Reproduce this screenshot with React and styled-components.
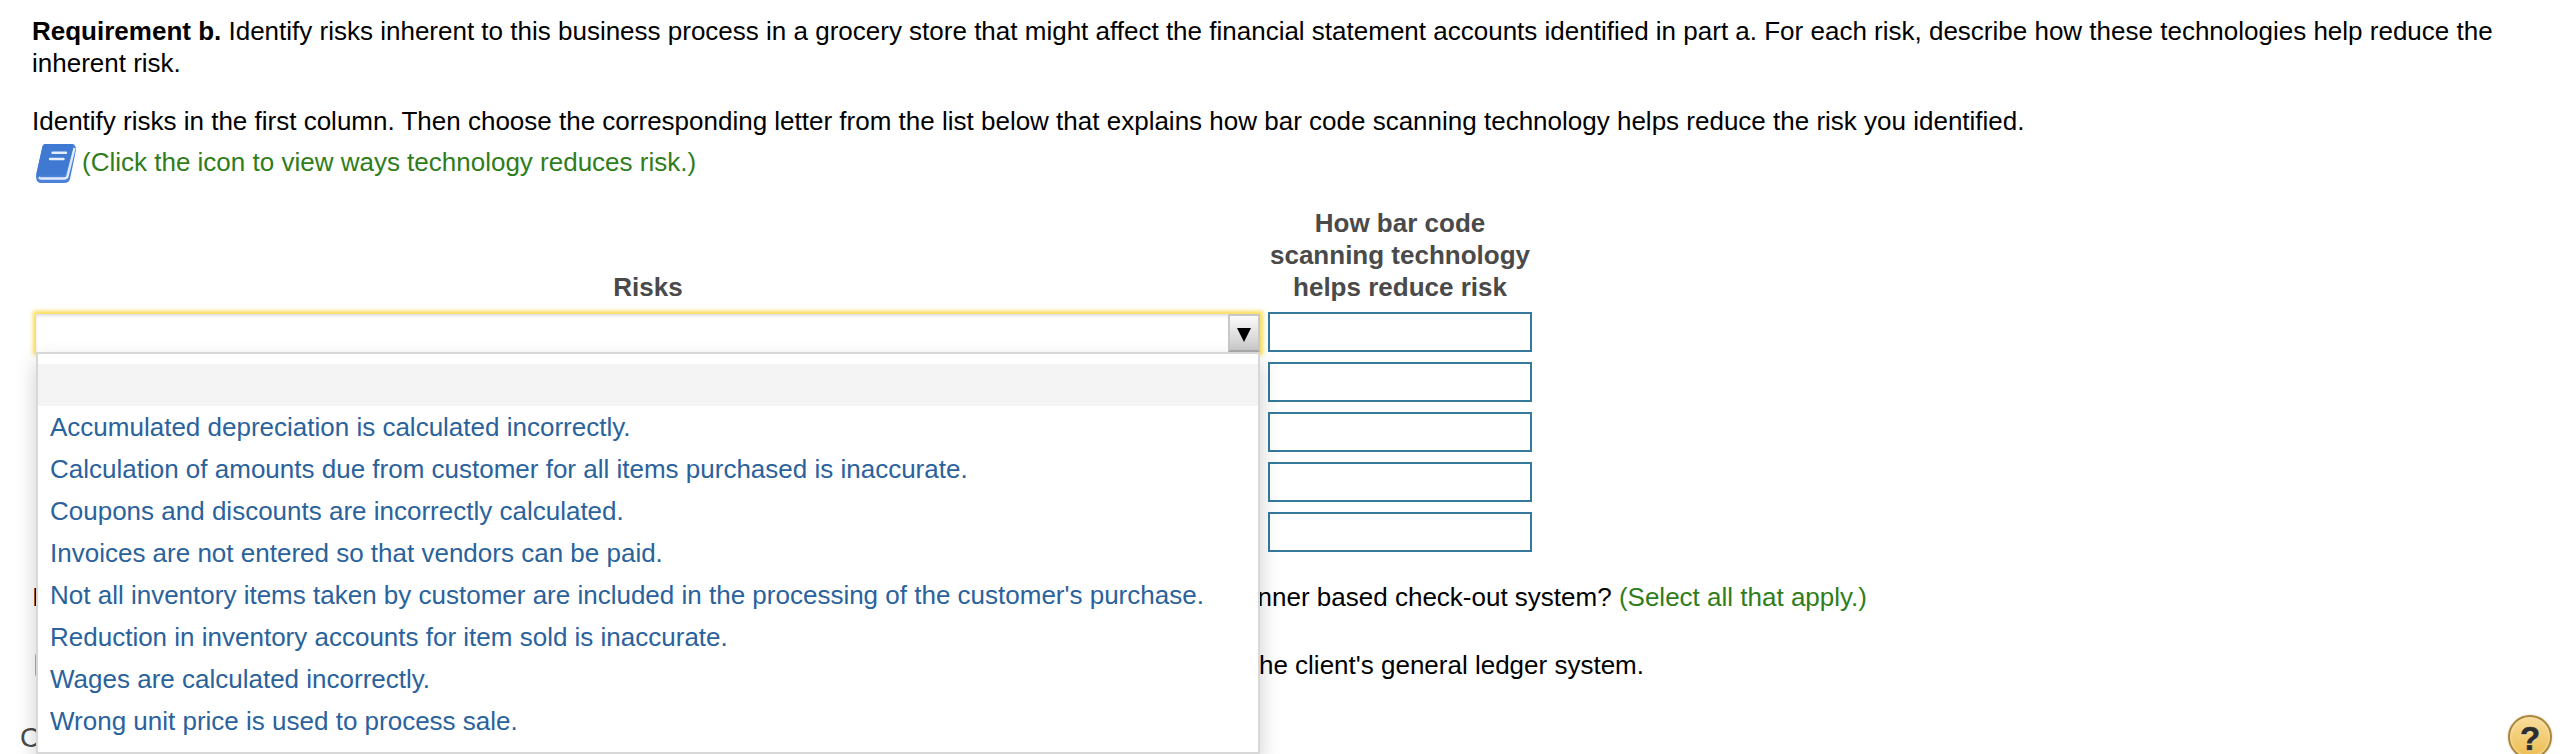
import React from 'react'
import styled, { createGlobalStyle } from 'styled-components'

const GlobalStyle = createGlobalStyle`
  body {
    margin: 0;
    background: #fff;
    overflow: hidden;
  }
`

const Page = styled.main`
  box-sizing: border-box;
  height: 754px;
  padding: 15px 32px 0;
  position: relative;
  overflow: hidden;
  color: #000;
  font-family: "Liberation Sans", Arial, sans-serif;
  font-size: 26px;
  line-height: 32px;
`

const Paragraph = styled.p`
  margin: 0 0 ${({ $gap }) => $gap || 0}px;
`

const IconLink = styled.a`
  display: flex;
  align-items: flex-start;
  height: 40px;
  margin-top: 7px;
  padding-left: 4px;
  gap: 6px;
  color: #2f7d1b;
  line-height: 36px;
`

const BookIcon = styled.svg`
  width: 40px;
  height: 40px;
`

const Table = styled.div`
  display: grid;
  grid-template-columns: 1228px 264px;
  column-gap: 8px;
  margin-top: 23px;
`

const Heading = styled.div`
  align-self: end;
  padding: 0 0 9px ${({ $indent }) => $indent || 0}px;
  color: #4a4a4a;
  font-weight: bold;
  text-align: center;
`

const ComboCell = styled.div`
  position: relative;
  padding: 2px 0 0 4px;
`

const Combo = styled.div`
  display: flex;
  justify-content: flex-end;
  height: 38px;
  background: #fff;
  box-shadow: 0 0 4px 3px #fbdc55, inset 0 2px 3px rgba(0, 0, 0, 0.12);
`

const ComboButton = styled.button`
  display: flex;
  align-items: center;
  justify-content: center;
  box-sizing: border-box;
  width: 32px;
  height: 38px;
  padding: 3px 0 0;
  border: 2px solid #c8c8c8;
  border-bottom-color: #aaa;
  background: linear-gradient(#fbfbfb, #c9c9c9);
`

const Menu = styled.ul`
  position: absolute;
  top: 40px;
  left: 4px;
  z-index: 2;
  box-sizing: border-box;
  width: 1224px;
  height: 402px;
  margin: 0;
  padding: 10px 0;
  border: 2px solid #d8d8d8;
  background: #fff;
  box-shadow: 0 10px 20px rgba(0, 0, 0, 0.2);
  list-style: none;
`

const MenuItem = styled.li`
  height: 42px;
  padding-left: 12px;
  background: ${({ $active }) => ($active ? '#f4f4f4' : 'transparent')};
  color: #2a629c;
  line-height: 42px;
  white-space: nowrap;
`

const Answers = styled.div`
  display: grid;
  row-gap: 10px;
`

const AnswerBox = styled.div`
  box-sizing: border-box;
  height: 40px;
  border: 2px solid #35799b;
  background: #fff;
`

const SplitRow = styled.div`
  display: flex;
  justify-content: space-between;
  width: ${({ $width }) => $width}px;
  margin-top: ${({ $top }) => $top}px;
`

const Green = styled.span`
  color: #2f7d1b;
`

const Checkbox = styled.span`
  box-sizing: border-box;
  width: 26px;
  height: 26px;
  margin: 3px 0 0 3px;
  border: 1px solid #a9a9d0;
  border-radius: 4px;
`

const Footer = styled.div`
  display: flex;
  justify-content: space-between;
  margin: 34px -24px 0 -12px;
  color: #4a4a4a;
  font-size: 28px;
`

const FooterNote = styled.span`
  margin-top: 7px;
`

const HelpButton = styled.button`
  box-sizing: border-box;
  width: 44px;
  height: 44px;
  margin: 0;
  padding: 4px 0 0;
  flex: none;
  border: 2px solid #ab8739;
  border-radius: 50%;
  background: linear-gradient(#f8dc9c, #edbd50);
  box-shadow: inset 0 0 2px 1px #f7dfa8, 0 0 2px rgba(120, 90, 30, 0.4);
  color: #2d2d31;
  font: bold 33px/34px "Liberation Sans", Arial, sans-serif;
  text-shadow: 0 1px 1px #fff0c8;
  -webkit-text-stroke: 0.6px #2d2d31;
`

const risks = [
  '',
  'Accumulated depreciation is calculated incorrectly.',
  'Calculation of amounts due from customer for all items purchased is inaccurate.',
  'Coupons and discounts are incorrectly calculated.',
  'Invoices are not entered so that vendors can be paid.',
  "Not all inventory items taken by customer are included in the processing of the customer's purchase.",
  'Reduction in inventory accounts for item sold is inaccurate.',
  'Wages are calculated incorrectly.',
  'Wrong unit price is used to process sale.',
]

const Book = () => (
  <BookIcon viewBox="0 0 40 40">
    <path d="M9 0H37Q40 1 40 6L34 35Q33 39 28 39H4Q0 38 0 32L6 4Q7 0 9 0Z" fill="#4c83d8" />
    <path d="M38.5 4L31.5 32Q31 34.5 28 34.5H5Q2.5 34.5 3 32" fill="none" stroke="#dfeafa" strokeWidth="2.4" />
    <path d="M10 0H35Q38 0 37 4L30 28Q29 31.5 26 31.5H5Q3 31.5 3 34Q0 33 0.5 29L6.5 3Q7 0 10 0Z" fill="#3f79d2" />
    <path d="M16.5 8.8H30M14 15H27.5" stroke="#e3edfb" strokeWidth="2.4" strokeLinecap="round" />
  </BookIcon>
)

const App = () => {
  return (
    <>
      <GlobalStyle />
      <Page>
        <Paragraph $gap={26}>
          <b>Requirement b.</b> Identify risks inherent to this business process in a grocery store that might affect the financial statement accounts identified in part a. For each risk, describe how these technologies help reduce the inherent risk.
        </Paragraph>
        <Paragraph>
          Identify risks in the first column. Then choose the corresponding letter from the list below that explains how bar code scanning technology helps reduce the risk you identified.
        </Paragraph>
        <IconLink>
          <Book />
          (Click the icon to view ways technology reduces risk.)
        </IconLink>
        <Table>
          <Heading $indent={4}>Risks</Heading>
          <Heading>
            How bar code<br />scanning technology<br />helps reduce risk
          </Heading>
          <ComboCell>
            <Combo>
              <ComboButton>
                <svg width="14" height="14" viewBox="0 0 14 14">
                  <path d="M0 0H14L7 14Z" fill="#000" />
                </svg>
              </ComboButton>
            </Combo>
            <Menu>
              {risks.map((risk, i) => (
                <MenuItem key={i} $active={i === 0}>{risk}</MenuItem>
              ))}
            </Menu>
          </ComboCell>
          <Answers>
            {[1, 2, 3, 4, 5].map((n) => (
              <AnswerBox key={n} />
            ))}
          </Answers>
        </Table>
        <SplitRow $top={29} $width={1835}>
          <span>I</span>
          <span>
            scanner based check-out system? <Green>(Select all that apply.)</Green>
          </span>
        </SplitRow>
        <SplitRow $top={36} $width={1612}>
          <Checkbox />
          <span>the client's general ledger system.</span>
        </SplitRow>
        <Footer>
          <FooterNote>C</FooterNote>
          <HelpButton>?</HelpButton>
        </Footer>
      </Page>
    </>
  )
}

export default App
